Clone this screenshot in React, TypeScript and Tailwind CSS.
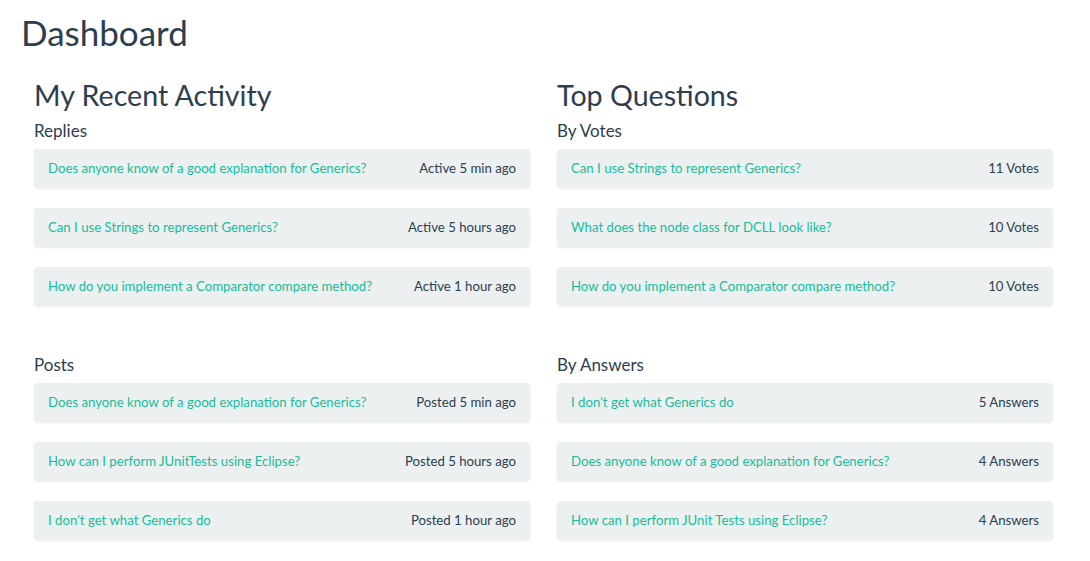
const replies = [
  { title: "Does anyone know of a good explanation for Generics?", meta: "Active 5 min ago" },
  { title: "Can I use Strings to represent Generics?", meta: "Active 5 hours ago" },
  { title: "How do you implement a Comparator compare method?", meta: "Active 1 hour ago" },
];

const posts = [
  { title: "Does anyone know of a good explanation for Generics?", meta: "Posted 5 min ago" },
  { title: "How can I perform JUnitTests using Eclipse?", meta: "Posted 5 hours ago" },
  { title: "I don't get what Generics do", meta: "Posted 1 hour ago" },
];

const byVotes = [
  { title: "Can I use Strings to represent Generics?", meta: "11 Votes" },
  { title: "What does the node class for DCLL look like?", meta: "10 Votes" },
  { title: "How do you implement a Comparator compare method?", meta: "10 Votes" },
];

const byAnswers = [
  { title: "I don't get what Generics do", meta: "5 Answers" },
  { title: "Does anyone know of a good explanation for Generics?", meta: "4 Answers" },
  { title: "How can I perform JUnit Tests using Eclipse?", meta: "4 Answers" },
];

type Item = { title: string; meta: string };

const ItemList = ({ label, items }: { label: string; items: Item[] }) => {
  return (
    <div>
      <h3 className="text-[17px] leading-[22px] mb-[7px]">{label}</h3>
      <div className="flex flex-col gap-[20px]">
        {items.map((item) => (
          <div
            key={item.title}
            className="h-[39px] flex items-center justify-between px-[14px] bg-[#ecf0f1] rounded-[4px] shadow-[0_1px_2px_rgba(0,0,0,0.08)] text-[13.2px]"
          >
            <a href="#" className="text-[#18bc9c]">
              {item.title}
            </a>
            <span>{item.meta}</span>
          </div>
        ))}
      </div>
    </div>
  );
};

const App = () => {
  return (
    <div className="min-h-screen bg-white text-[#2c3e50] font-['Lato',sans-serif] pt-[12px]">
      <h1 className="text-[35px] leading-[40px] pl-[21px]">Dashboard</h1>
      <div className="grid grid-cols-2 gap-[27px] pl-[34px] pr-[37px] mt-[26px]">
        <div>
          <h2 className="text-[28.6px] leading-[34px] mb-[8px]">My Recent Activity</h2>
          <ItemList label="Replies" items={replies} />
          <div className="mt-[48px]">
            <ItemList label="Posts" items={posts} />
          </div>
        </div>
        <div>
          <h2 className="text-[28.6px] leading-[34px] mb-[8px]">Top Questions</h2>
          <ItemList label="By Votes" items={byVotes} />
          <div className="mt-[48px]">
            <ItemList label="By Answers" items={byAnswers} />
          </div>
        </div>
      </div>
    </div>
  );
};

export default App;
